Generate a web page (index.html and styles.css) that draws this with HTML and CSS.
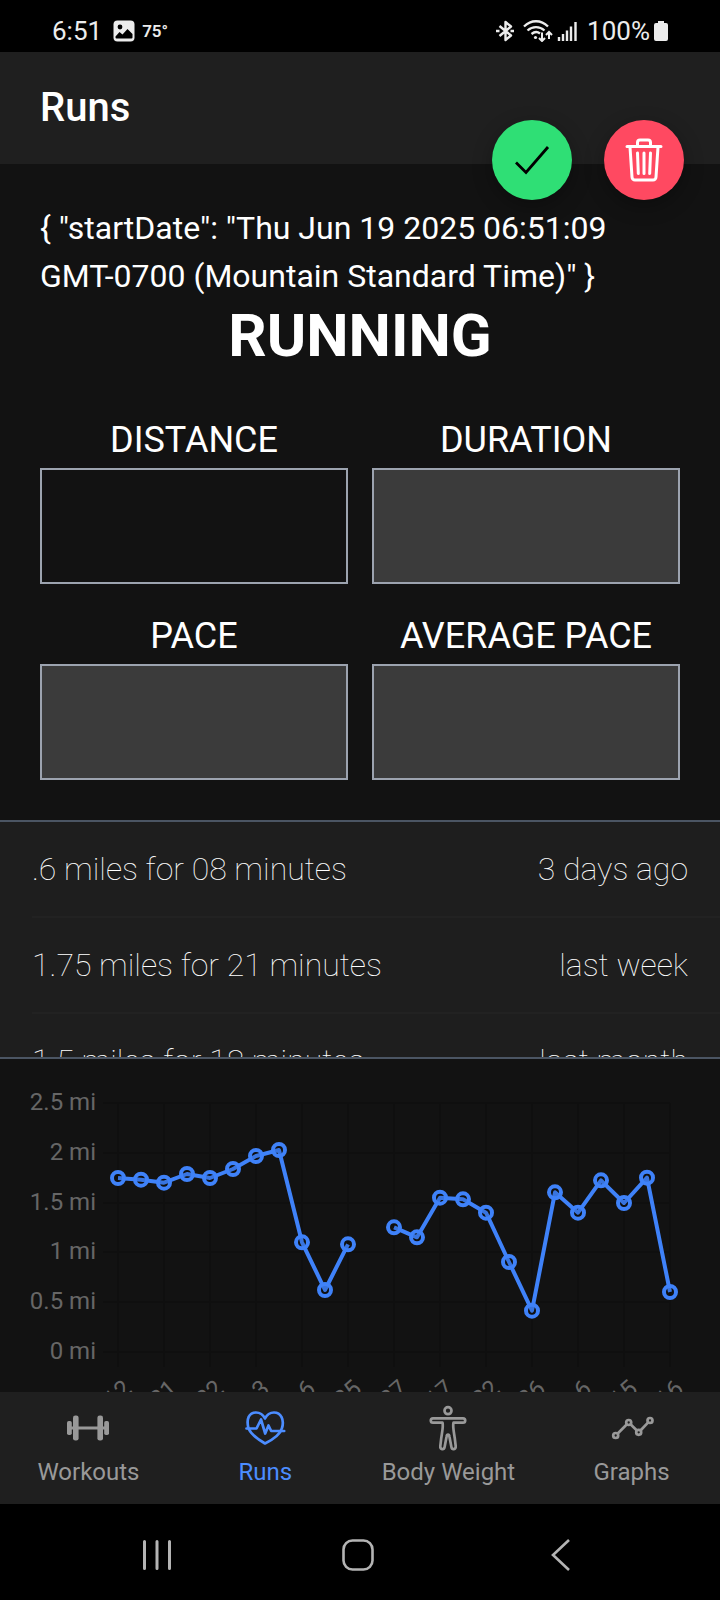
FILE: index.html
```html
<!DOCTYPE html>
<html lang="en">
<head>
<meta charset="utf-8">
<meta name="viewport" content="width=device-width, initial-scale=1">
<title>Runs</title>
<link rel="stylesheet" href="styles.css">
</head>
<body>
<div class="status">
  <span class="clock">6:51</span>
  <svg class="photo" width="22" height="22" viewBox="0 0 22 22"><rect x="0.5" y="0.5" width="21" height="21" rx="4" fill="#ececec"/><circle cx="7" cy="7" r="2.4" fill="#000"/><path d="M2.5 16.5 6.5 12l3 2.500L14.500 9l5 5v3.500a1 1 0 0 1-1 1h-15a1 1 0 0 1-1-1z" fill="#000"/></svg>
  <span class="temp">75°</span>
  <div class="status-right">
    <svg width="18" height="22" viewBox="0 0 18 22" fill="none" stroke="#ececec" stroke-width="2.400" stroke-linejoin="round"><path d="M3.500 6 15 15.500 9.500 20V2l5.500 4.500L3.500 16"/><path d="M0 11h3.500M14.500 11H18"/></svg>
    <svg class="wifi" width="30" height="22" viewBox="0 0 30 22" fill="none" stroke="#ececec" stroke-width="2.300"><path d="M1 6.500C8-.5 18-.5 25 6.500M4.500 10.500c5-4.500 12-4.500 17 0M8.500 14c3-2.500 6-2.500 8.500-.5"/><circle cx="12.500" cy="17.500" r="1.600" fill="#ececec" stroke="none"/><path d="M19 12.500v8M16 18l3 3 3-3M26 19v-7M23 15l3-3 3 3" stroke-width="2"/></svg>
    <svg width="20" height="22" viewBox="0 0 20 22" stroke="#ececec" stroke-width="2.400"><path d="M2 21v-4M6 21v-7M10 21V10.500M14 21V6.500M18.500 21V2"/></svg>
    <span class="clock percent">100%</span>
    <svg width="14" height="22" viewBox="0 0 14 22" fill="#ececec"><path d="M4 1h6v2h2a2 2 0 0 1 2 2v14a2 2 0 0 1-2 2H2a2 2 0 0 1-2-2V5a2 2 0 0 1 2-2h2z"/></svg>
  </div>
</div>
<header class="toolbar">
  <h1 class="title">Runs</h1>
  <div class="fabs">
    <button class="fab fab-save" type="button" aria-label="Save run"><svg width="80" height="80" viewBox="0 0 80 80" fill="none" stroke="#000" stroke-width="2.800"><path d="m24 42.500 10 10L56 27"/></svg></button>
    <button class="fab fab-delete" type="button" aria-label="Delete run"><svg width="80" height="80" viewBox="0 0 80 80" fill="none" stroke="#fff" stroke-width="3" stroke-linecap="round" stroke-linejoin="round"><path d="M23 26.500h34M33.500 26v-3.500a2.500 2.500 0 0 1 2.500-2.500h8a2.500 2.500 0 0 1 2.500 2.500V26M26 27l2 30a3 3 0 0 0 3 3h18a3 3 0 0 0 3-3l2-30M33.500 33l.8 20.500M40 33v20.500M46.500 33l-.8 20.500"/></svg></button>
  </div>
</header>
<main class="content">
  <section class="run">
    <p class="state">{ "startDate": "Thu Jun 19 2025 06:51:09 GMT-0700 (Mountain Standard Time)" }</p>
    <h2 class="heading">RUNNING</h2>
    <form class="fields">
      <div class="field"><label for="distance">DISTANCE</label><input id="distance" type="text"></div>
      <div class="field"><label for="duration">DURATION</label><input id="duration" type="text" disabled></div>
      <div class="field"><label for="pace">PACE</label><input id="pace" type="text" disabled></div>
      <div class="field"><label for="average">AVERAGE PACE</label><input id="average" type="text" disabled></div>
    </form>
  </section>
  <ul class="history">
    <li class="entry"><span>.6 miles for 08 minutes</span><span>3 days ago</span></li>
    <li class="entry"><span>1.75 miles for 21 minutes</span><span>last week</span></li>
    <li class="entry"><span>1.5 miles for 18 minutes</span><span>last month</span></li>
  </ul>
  <section class="chart">
    <svg class="plot" viewBox="0 0 720 333" role="img" aria-label="Miles per run">
      <path class="grid" d="M103 44H670M103 94H670M103 144H670M103 193H670M103 243H670M103 293H670M118 44V308M164 44V308M210 44V308M256 44V308M302 44V308M348 44V308M394 44V308M440 44V308M486 44V308M532 44V308M578 44V308M624 44V308M670 44V308"/>
      <g class="ticks" text-anchor="end">
        <text x="96" y="51">2.5 mi</text>
        <text x="96" y="101">2 mi</text>
        <text x="96" y="151">1.5 mi</text>
        <text x="96" y="200">1 mi</text>
        <text x="96" y="250">0.5 mi</text>
        <text x="96" y="300">0 mi</text>
        <text transform="translate(133 332) rotate(-41)">12</text>
        <text transform="translate(179 332) rotate(-41)">21</text>
        <text transform="translate(225 332) rotate(-41)">22</text>
        <text transform="translate(271 332) rotate(-41)">3</text>
        <text transform="translate(317 332) rotate(-41)">6</text>
        <text transform="translate(363 332) rotate(-41)">25</text>
        <text transform="translate(409 332) rotate(-41)">27</text>
        <text transform="translate(455 332) rotate(-41)">17</text>
        <text transform="translate(501 332) rotate(-41)">22</text>
        <text transform="translate(547 332) rotate(-41)">26</text>
        <text transform="translate(593 332) rotate(-41)">6</text>
        <text transform="translate(639 332) rotate(-41)">15</text>
        <text transform="translate(685 332) rotate(-41)">16</text>
      </g>
      <g class="series">
        <polyline points="118,119 141,120.700 164,123.700 187,115 210,119 233,110 256,97 279,91 302,183.300 325,231 348,185.300"/>
        <polyline points="394,168.300 417,178.300 440,138.700 463,140.300 486,153.700 509,203 532,251.700 555,133.300 578,153.700 601,121.300 624,144 647,118.700 670,233"/>
        <g class="points">
          <circle cx="118" cy="119" r="6"/><circle cx="141" cy="120.700" r="6"/><circle cx="164" cy="123.700" r="6"/><circle cx="187" cy="115" r="6"/><circle cx="210" cy="119" r="6"/><circle cx="233" cy="110" r="6"/><circle cx="256" cy="97" r="6"/><circle cx="279" cy="91" r="6"/><circle cx="302" cy="183.300" r="6"/><circle cx="325" cy="231" r="6"/><circle cx="348" cy="185.300" r="6"/>
          <circle cx="394" cy="168.300" r="6"/><circle cx="417" cy="178.300" r="6"/><circle cx="440" cy="138.700" r="6"/><circle cx="463" cy="140.300" r="6"/><circle cx="486" cy="153.700" r="6"/><circle cx="509" cy="203" r="6"/><circle cx="532" cy="251.700" r="6"/><circle cx="555" cy="133.300" r="6"/><circle cx="578" cy="153.700" r="6"/><circle cx="601" cy="121.300" r="6"/><circle cx="624" cy="144" r="6"/><circle cx="647" cy="118.700" r="6"/><circle cx="670" cy="233" r="6"/>
        </g>
      </g>
    </svg>
  </section>
</main>
<nav class="tabs">
  <a class="tab" href="#workouts">
    <svg width="44" height="44" viewBox="0 0 44 44" fill="currentColor"><rect x="7" y="9.500" width="5.600" height="25" rx="2.300"/><rect x="31.400" y="9.500" width="5.600" height="25" rx="2.300"/><rect x="1" y="15" width="4.800" height="14" rx="1.800"/><rect x="38.200" y="15" width="4.800" height="14" rx="1.800"/><path d="M4 20.500h36v3H4z"/></svg>
    <span>Workouts</span></a>
  <a class="tab tab-active" href="#runs" aria-current="page">
    <svg width="44" height="44" viewBox="0 0 44 44" fill="none" stroke="currentColor" stroke-width="2.700" stroke-linecap="round" stroke-linejoin="round"><path d="M5.500 22.500C3 13 6 6.500 13 6.500c4 0 7 2 9 6 2-4 5-6 9-6 7 0 10.500 7 8 15.500C37.500 28 30 33.500 22 37.500 15 33.500 8.500 29 5.500 22.500"/><path d="M3.500 22.500h10l4.500-9 4.200 14 3.300-8 2.700 5.500h13"/></svg>
    <span>Runs</span></a>
  <a class="tab" href="#body-weight">
    <svg class="body-icon" width="44" height="44" viewBox="0 0 44 44" fill="none" stroke="currentColor" stroke-width="2.700" stroke-linejoin="round"><circle cx="22" cy="4.700" r="3.500"/><path d="M16.500 16.700H7a2.200 2.200 0 0 1 0-4.400h30a2.200 2.200 0 0 1 0 4.400h-9.500c-1 3 .3 9 1.200 15l1 8.500c.3 3.700-3.700 3.900-4.300.8l-2-10.500c-.3-2.500-2.500-2.500-2.800 0l-2 10.500c-.6 3.100-4.600 2.900-4.300-.8l1-8.500c.9-6 2.200-12 1.200-15z"/></svg>
    <span>Body Weight</span></a>
  <a class="tab" href="#graphs">
    <svg width="44" height="44" viewBox="0 0 44 44" fill="none" stroke="currentColor" stroke-width="2.700"><circle cx="5.700" cy="29.500" r="2.500"/><circle cx="18.700" cy="16.500" r="2.500"/><circle cx="28.700" cy="26.300" r="2.500"/><circle cx="40" cy="14.500" r="2.500"/><path d="m7.500 27.700 9.400-9.400M20.500 18.300l6.400 6.200M30.500 24.500l7.700-8.200"/></svg>
    <span>Graphs</span></a>
</nav>
<div class="system">
  <button type="button" aria-label="Recent apps"><svg width="32" height="32" viewBox="0 0 32 32" stroke="#b4b4b4" stroke-width="3" stroke-linecap="round"><path d="M3.500 2.500v27M16 2.500v27M28.500 2.500v27"/></svg></button>
  <button type="button" aria-label="Home"><svg width="32" height="32" viewBox="0 0 32 32" fill="none" stroke="#b4b4b4" stroke-width="2.600"><rect x="1.500" y="1.500" width="29" height="29" rx="9"/></svg></button>
  <button type="button" aria-label="Back"><svg width="32" height="32" viewBox="0 0 32 32" fill="none" stroke="#b4b4b4" stroke-width="2.600"><path d="M26 1 10 16l16 15"/></svg></button>
</div>
</body>
</html>
```
FILE: styles.css
```css
* { box-sizing: border-box; }
body {
  margin: 0;
  height: 100vh;
  display: flex;
  flex-direction: column;
  background: #121212;
  color: #fff;
  font-family: Roboto, "Liberation Sans", sans-serif;
  font-size: 32px;
}
button { padding: 0; border: 0; background: none; cursor: pointer; }
svg { display: block; flex: none; }

.status {
  display: flex;
  align-items: center;
  flex: none;
  padding: 10px 52px 0;
  height: 52px;
  background: #000;
  color: #ececec;
}
.clock { font-size: 26px; line-height: 32px; }
.photo { margin: 0 7px 0 11px; }
.temp { font-size: 17px; font-weight: 600; line-height: 24px; }
.status-right { display: flex; align-items: center; gap: 4px; margin-left: auto; }
.wifi { margin-left: 5px; }
.percent { margin-left: 6px; }

.toolbar {
  position: relative;
  z-index: 1;
  display: flex;
  align-items: center;
  flex: none;
  padding: 0 40px;
  height: 112px;
  background: #1f1f1f;
}
.title { margin: 0; font-size: 40px; font-weight: 500; line-height: 48px; }
.fabs { position: absolute; top: 68px; right: 36px; display: flex; gap: 32px; }
.fab {
  width: 80px;
  height: 80px;
  border-radius: 50%;
  box-shadow: 0 6px 20px rgba(0, 0, 0, 0.3);
}
.fab-save { background: #2fdf75; }
.fab-delete { background: #ff4961; }

.content { display: flex; flex-direction: column; flex: 1; min-height: 0; overflow: hidden; }
.run { flex: none; padding: 40px; }
.state { margin: 0; line-height: 48px; }
.heading { margin: 0 0 40px; font-size: 60px; font-weight: 700; line-height: 72px; text-align: center; }
.fields { display: grid; grid-template-columns: 1fr 1fr; gap: 24px; }
.field { display: flex; flex-direction: column; min-width: 0; }
.field label { font-size: 36px; line-height: 56px; text-align: center; }
.field input {
  width: 100%;
  height: 116px;
  padding: 0 24px;
  border: 2px solid #9ca3af;
  border-radius: 0;
  background: transparent;
  color: #fff;
  font: inherit;
  text-align: center;
}
.field input:disabled { background: #3b3b3b; }

.history {
  flex: none;
  margin: 0;
  padding: 0 0 0 32px;
  height: 239px;
  overflow: hidden;
  list-style: none;
  background: #1e1e1e;
  border: solid #4b5563;
  border-width: 2px 0;
}
.entry {
  display: flex;
  align-items: center;
  justify-content: space-between;
  height: 96px;
  padding-right: 32px;
  border-bottom: 2px solid #222;
  font-weight: 100;
}

.chart { flex: 1; min-height: 0; overflow: hidden; }
.plot { width: 100%; height: auto; }
.grid { stroke: #0f0f0f; stroke-width: 2; fill: none; }
.ticks { fill: #666; font-size: 24px; }
.series { fill: none; stroke: #3f82f9; stroke-width: 4; stroke-linejoin: round; }
.points { fill: rgba(0, 0, 0, 0.1); }

.tabs { display: flex; flex: none; height: 112px; background: #1f1f1f; }
.tab {
  display: flex;
  flex-direction: column;
  align-items: center;
  gap: 8px;
  flex: 1 1 0;
  padding: 14px 28px 0;
  color: #999;
  font-size: 24px;
  line-height: 28px;
  text-decoration: none;
  white-space: nowrap;
}
.tab-active { color: #4c8dff; }
.body-icon { overflow: visible; }

.system { display: flex; flex: none; height: 96px; padding: 6px 60px 0 56px; background: #000; }
.system button { display: flex; align-items: center; justify-content: center; flex: 1; }
```
